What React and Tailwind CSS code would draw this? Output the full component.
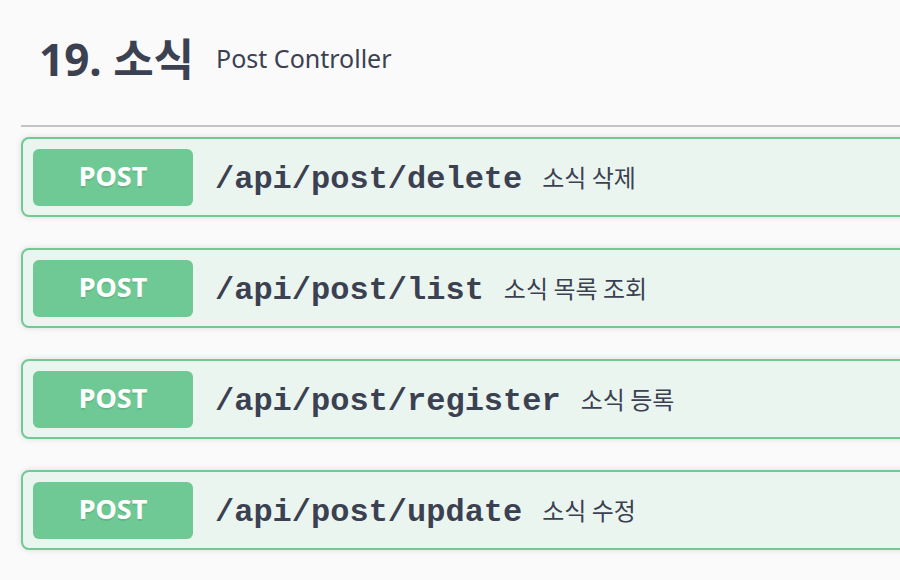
import React from "react";

const rows = [
  { path: "/api/post/delete", desc: "소식 삭제" },
  { path: "/api/post/list", desc: "소식 목록 조회" },
  { path: "/api/post/register", desc: "소식 등록" },
  { path: "/api/post/update", desc: "소식 수정" },
];

const sans = "font-['Noto_Sans','Noto_Sans_CJK_KR',sans-serif]";

export default function App() {
  return (
    <div className={`h-[580px] w-[900px] overflow-hidden bg-[#fafafa] ${sans} text-[#3b4151]`}>
      <div className="w-[1000px] pl-[21px]">
        <div className="flex h-[127px] items-center border-b-2 border-[#c4c4c8] pl-[18px] pb-[8px]">
          <span className="text-[44px] font-bold leading-none">19. 소식</span>
          <span className="ml-[22px] text-[25px] leading-none">Post Controller</span>
        </div>
        <div className="mt-[10px] flex flex-col gap-[31px]">
          {rows.map((r) => (
            <div
              key={r.path}
              className="flex h-[80px] items-center rounded-[8px] border-2 border-[#72c994] bg-[#ebf5f0] px-[10px] shadow-[0_0_6px_rgba(0,0,0,0.12)]"
            >
              <div className="flex h-[57px] w-[160px] items-center justify-center rounded-[6px] bg-[#6fc995] pb-[2px] text-[27px] font-bold text-white [text-shadow:0_2px_0_rgba(0,0,0,0.1)]">
                POST
              </div>
              <span className="ml-[22px] mt-[5px] font-['Liberation_Mono','Courier_New',monospace] text-[32px] font-bold leading-none">
                {r.path}
              </span>
              <span className="ml-[20px] font-['Noto_Sans_CJK_KR',sans-serif] text-[24px] leading-none">
                {r.desc}
              </span>
            </div>
          ))}
        </div>
      </div>
    </div>
  );
}
